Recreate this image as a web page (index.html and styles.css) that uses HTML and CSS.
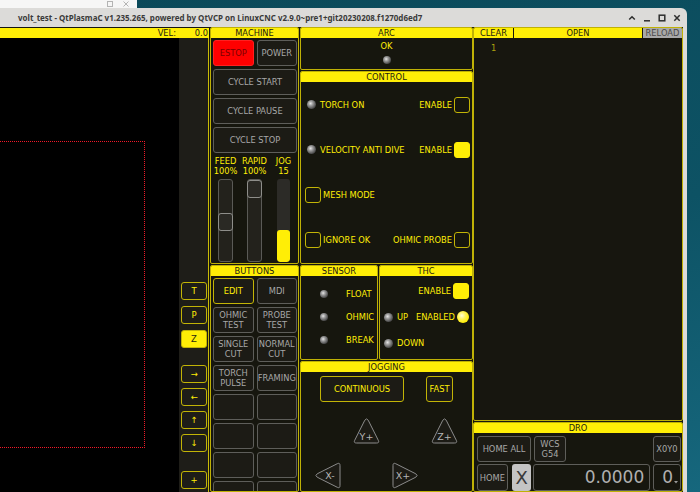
FILE: index.html
```html
<!DOCTYPE html>
<html>
<head>
<meta charset="utf-8">
<link rel="stylesheet" href="styles.css">
</head>
<body>
<div class="deskbar">
  <div class="bgwin">
    <svg width="6" height="6" viewBox="0 0 6 6"><rect x="0.5" y="0.5" width="5" height="5" fill="none" stroke="#b4b4b4"/></svg>
    <svg width="6" height="6" viewBox="0 0 6 6"><path d="M0.5 0.5L5.5 5.5M5.5 0.5L0.5 5.5" stroke="#b4b4b4"/></svg>
  </div>
</div>
<div class="stage">
<div class="win">
  <div class="titlebar">
    <span class="title">volt_test - QtPlasmaC v1.235.265, powered by QtVCP on LinuxCNC v2.9.0~pre1+git20230208.f1270d6ed7</span>
    <div class="wctl">
      <svg width="8" height="8" viewBox="0 0 8 8"><path d="M1.2 5.5L4 2.7L6.8 5.5" fill="none" stroke="#2e2e2e" stroke-width="1.5"/></svg>
      <svg width="8" height="8" viewBox="0 0 8 8"><path d="M1 6.8H7" stroke="#2e2e2e" stroke-width="1.5"/></svg>
      <svg width="8" height="8" viewBox="0 0 8 8"><rect x="1.2" y="1.2" width="5.6" height="5.6" fill="none" stroke="#2e2e2e" stroke-width="1.5"/></svg>
      <svg width="8" height="8" viewBox="0 0 8 8"><path d="M1.3 1.3L6.7 6.7M6.7 1.3L1.3 6.7" stroke="#2e2e2e" stroke-width="1.5"/></svg>
    </div>
  </div>
  <div class="main">
    <!-- preview -->
    <div class="preview">
      <div class="hdr hdr-vel"><span>VEL:</span><span class="velv">0.0</span></div>
      <div class="pv-body">
        <div class="canvas"><div class="limits"></div></div>
        <div class="toolbar">
          <div class="tb">T</div>
          <div class="tb">P</div>
          <div class="tb on">Z</div>
          <div class="tb g2">&#8594;</div>
          <div class="tb g">&#8592;</div>
          <div class="tb g">&#8593;</div>
          <div class="tb g">&#8595;</div>
          <div class="tb g3">+</div>
        </div>
      </div>
    </div>

    <!-- machine column -->
    <div class="mcol">
      <div class="panel machine">
        <div class="hdr">MACHINE</div>
        <div class="mgrid">
          <div class="btn estop">ESTOP</div>
          <div class="btn">POWER</div>
          <div class="btn wide">CYCLE START</div>
          <div class="btn wide">CYCLE PAUSE</div>
          <div class="btn wide">CYCLE STOP</div>
        </div>
        <div class="ovr">
          <div class="ovc">
            <div class="ovl">FEED</div><div class="ovl">100%</div>
            <div class="track"><div class="handle" style="margin-top:33px"></div></div>
          </div>
          <div class="ovc">
            <div class="ovl">RAPID</div><div class="ovl">100%</div>
            <div class="track"><div class="handle" style="margin-top:0px"></div></div>
          </div>
          <div class="ovc">
            <div class="ovl">JOG</div><div class="ovl">15</div>
            <div class="jbar"><div class="jfill" style="height:32px"></div></div>
          </div>
        </div>
      </div>
      <div class="panel buttons">
        <div class="hdr">BUTTONS</div>
        <div class="bgrid">
          <div class="btn y">EDIT</div>
          <div class="btn">MDI</div>
          <div class="btn">OHMIC<br>TEST</div>
          <div class="btn">PROBE<br>TEST</div>
          <div class="btn">SINGLE<br>CUT</div>
          <div class="btn">NORMAL<br>CUT</div>
          <div class="btn">TORCH<br>PULSE</div>
          <div class="btn">FRAMING</div>
          <div class="btn"></div>
          <div class="btn"></div>
          <div class="btn"></div>
          <div class="btn"></div>
          <div class="btn"></div>
          <div class="btn"></div>
          <div class="btn"></div>
          <div class="btn"></div>
        </div>
      </div>
    </div>

    <!-- middle column -->
    <div class="midcol">
      <div class="panel arc">
        <div class="hdr">ARC</div>
        <div class="arcbody">
          <div class="arcok">OK</div>
          <div class="led arcled"></div>
        </div>
      </div>
      <div class="panel control">
        <div class="hdr">CONTROL</div>
        <div class="crows">
          <div class="crow">
            <span class="led cled"></span><span class="clbl">TORCH ON</span>
            <span class="rlbl">ENABLE</span><span class="chk"></span>
          </div>
          <div class="crow">
            <span class="led cled"></span><span class="clbl">VELOCITY ANTI DIVE</span>
            <span class="rlbl">ENABLE</span><span class="chk on"></span>
          </div>
          <div class="crow">
            <span class="chk"></span><span class="klbl">MESH MODE</span>
          </div>
          <div class="crow">
            <span class="chk"></span><span class="klbl">IGNORE OK</span>
            <span class="rlbl">OHMIC PROBE</span><span class="chk"></span>
          </div>
        </div>
      </div>
      <div class="strow">
        <div class="panel sensor">
          <div class="hdr">SENSOR</div>
          <div class="srows">
            <div class="srow"><span class="led sled"></span><span class="slbl">FLOAT</span></div>
            <div class="srow"><span class="led sled"></span><span class="slbl">OHMIC</span></div>
            <div class="srow"><span class="led sled"></span><span class="slbl">BREAK</span></div>
          </div>
        </div>
        <div class="panel thc">
          <div class="hdr">THC</div>
          <div class="trows">
            <div class="trow"><span class="rlbl">ENABLE</span><span class="chk on"></span></div>
            <div class="trow"><span class="led tled"></span><span class="tlbl">UP</span><span class="rlbl">ENABLED</span><span class="yled"></span></div>
            <div class="trow"><span class="led tled"></span><span class="tlbl">DOWN</span></div>
          </div>
        </div>
      </div>
      <div class="panel jog">
        <div class="hdr">JOGGING</div>
        <div class="jrow1">
          <div class="btn y cont">CONTINUOUS</div>
          <div class="btn y fast">FAST</div>
        </div>
        <div class="jgrid">
          <div></div>
          <div class="tri up">
            <svg width="27" height="27" viewBox="0 0 27 27"><path d="M11.8 3.2Q13.5 0.6 15.2 3.2L25.3 23.3Q26.6 26 23.5 26L3.5 26Q0.4 26 1.7 23.3Z" fill="#1c1b15" stroke="#8c8c8c" stroke-width="1"/></svg>
            <span class="tlab">Y+</span>
          </div>
          <div></div>
          <div class="tri up">
            <svg width="27" height="27" viewBox="0 0 27 27"><path d="M11.8 3.2Q13.5 0.6 15.2 3.2L25.3 23.3Q26.6 26 23.5 26L3.5 26Q0.4 26 1.7 23.3Z" fill="#1c1b15" stroke="#8c8c8c" stroke-width="1"/></svg>
            <span class="tlab">Z+</span>
          </div>
          <div class="tri left">
            <svg width="27" height="27" viewBox="0 0 27 27"><path d="M3.2 11.8Q0.6 13.5 3.2 15.2L23.3 25.3Q26 26.6 26 23.5L26 3.5Q26 0.4 23.3 1.7Z" fill="#1c1b15" stroke="#8c8c8c" stroke-width="1"/></svg>
            <span class="tlab">X-</span>
          </div>
          <div></div>
          <div class="tri right">
            <svg width="27" height="27" viewBox="0 0 27 27"><path d="M23.8 11.8Q26.4 13.5 23.8 15.2L3.7 25.3Q1 26.6 1 23.5L1 3.5Q1 0.4 3.7 1.7Z" fill="#1c1b15" stroke="#8c8c8c" stroke-width="1"/></svg>
            <span class="tlab">X+</span>
          </div>
          <div></div>
        </div>
      </div>
    </div>

    <!-- right column -->
    <div class="rcol">
      <div class="panel code">
        <div class="chdr">
          <div class="ch clear">CLEAR</div>
          <div class="ch open">OPEN</div>
          <div class="ch reload">RELOAD</div>
        </div>
        <div class="lines"><span class="ln">1</span></div>
      </div>
      <div class="panel dro">
        <div class="hdr">DRO</div>
        <div class="drow1">
          <div class="btn homeall">HOME ALL</div>
          <div class="btn wcs">WCS<br>G54</div>
          <div class="btn x0y0">X0Y0</div>
        </div>
        <div class="drow2">
          <div class="btn home">HOME</div>
          <div class="axis">X</div>
          <div class="dval">0.0000</div>
          <div class="dsel"><span class="dz">0</span><svg width="4" height="3" viewBox="0 0 4 3"><path d="M0 0H4L2 2.5Z" fill="#9a9a9a"/></svg></div>
        </div>
      </div>
    </div>
  </div>
</div>
<div class="desk-right"></div>
</div>
</body>
</html>
```

FILE: styles.css
```css
* { box-sizing: border-box; margin: 0; padding: 0; }
html, body { width: 700px; height: 492px; overflow: hidden; }
body {
  background: linear-gradient(160deg, #0a4858 0%, #0d5264 60%, #16677d 100%);
  font-family: "DejaVu Sans", sans-serif;
  font-size: 8.3px;
  color: #ffee06;
}
.deskbar { height: 8px; display: flex; }
.bgwin {
  width: 137px; height: 8px; background: #f6f6f6;
  display: flex; justify-content: flex-end; align-items: flex-start;
  gap: 10px; padding: 1px 8px 0 0;
}
.stage { display: flex; height: 484px; }
.win {
  width: 687px; height: 484px; background: #dcdbd9;
  border-radius: 0 6px 0 0;
  display: flex; flex-direction: column;
}
.titlebar {
  height: 19px; display: flex; align-items: center;
  padding-left: 18px;
}
.title {
  font-family: "Noto Sans", sans-serif; font-weight: bold;
  font-size: 7.98px; color: #3a3a3a; white-space: nowrap;
}
.wctl { margin-left: auto; display: flex; gap: 7px; padding-right: 6px; align-items: center; }
.desk-right { flex: 1; }

.main {
  width: 683px; height: 465px; background: #16160e;
  display: flex; overflow: hidden;
}

.hdr {
  height: 10px; background: #ffee06; color: #1c1b10;
  line-height: 10px; text-align: center; white-space: nowrap;
  flex: none; align-self: stretch;
}

/* preview */
.preview { width: 209px; margin-right: 1px; display: flex; flex-direction: column; padding-top: 1px; }
.hdr-vel { display: flex; justify-content: flex-end; padding-right: 1px; }
.velv { width: 32px; text-align: right; }
.pv-body { flex: 1; display: flex; border-right: 1px solid #c8ba06; }
.canvas { width: 179px; background: #000; }
.limits {
  margin-top: 103px; width: 145px; height: 307px;
  border: 1px dotted #f01828; border-left: none;
}
.toolbar {
  width: 29px; background: #1e1d18;
  display: flex; flex-direction: column; align-items: flex-start;
  padding: 244px 0 0 2px;
}
.tb {
  width: 26px; height: 18px; flex: none;
  border: 1px solid #c2b406; border-radius: 3px;
  display: flex; align-items: center; justify-content: center;
  font-size: 8.5px; color: #ffee06; margin-bottom: 6px;
}
.tb.on { background: #ffee06; color: #2a2810; }
.tb.g2 { margin-top: 11px; margin-bottom: 5px; }
.tb.g { margin-bottom: 5px; }
.tb.g3 { margin-top: 14px; }

/* panels */
.panel { border: 1px solid #bfb106; border-radius: 2px; display: flex; flex-direction: column; overflow: hidden; }

.btn {
  border: 1px solid #5e5e5a; border-radius: 3px; background: #1c1b15;
  color: #a8a8a8; display: flex; align-items: center; justify-content: center;
  text-align: center; line-height: 10px; white-space: nowrap;
}
.btn.y { border-color: #c2b406; color: #ffee06; }
.btn.estop { background: #ff0000; border-color: #ff2020; color: #7a0000; }

.mcol { width: 89px; margin-right: 1px; display: flex; flex-direction: column; gap: 1px; }
.machine { height: 237px; flex: none; }
.mgrid {
  display: grid; grid-template-columns: 1fr 1fr; grid-auto-rows: 26px;
  gap: 3px; padding: 2px 1px 0 2px;
}
.mgrid .wide { grid-column: 1 / 3; }
.ovr { display: grid; grid-template-columns: 29px 29px 29px; margin-top: 3px; }
.ovc { display: flex; flex-direction: column; align-items: center; }
.ovl { line-height: 10px; height: 10px; }
.track {
  margin-top: 3px; width: 15px; height: 83px;
  border: 1px solid #5a5a56; border-radius: 3px; background: #23221c;
}
.handle {
  width: 15px; height: 18px; margin-left: -1px;
  border: 1px solid #8e8e8a; border-radius: 3px; background: #2a2924;
}
.jbar {
  margin-top: 3px; width: 13px; height: 83px; border-radius: 3px;
  background: #2c2b27; display: flex; flex-direction: column; justify-content: flex-end;
  overflow: hidden;
}
.jfill { background: #ffee06; border-radius: 3px; }

.buttons { flex: 1; }
.bgrid {
  display: grid; grid-template-columns: 1fr 1fr; grid-auto-rows: 26px;
  gap: 3px; padding: 2px 1px 0 2px;
}

/* middle */
.midcol { width: 173px; display: flex; flex-direction: column; gap: 1px; }
.arc { height: 43px; flex: none; }
.arcbody { display: flex; flex-direction: column; align-items: center; }
.arcok { margin-top: 3px; line-height: 10px; }
.led {
  display: block; border-radius: 50%; flex: none;
  background: radial-gradient(circle at 40% 38%, #e6e6e6 0%, #9a9a9a 30%, #4a4a4a 70%, #2c2c2c 100%);
}
.arcled { width: 8px; height: 8px; margin-top: 5px; }

.control { height: 193px; flex: none; }
.crows { display: grid; grid-template-rows: repeat(4, 45px); padding: 0 2px 0 4px; }
.crow { display: flex; align-items: center; }
.cled { width: 9px; height: 9px; margin-left: 2px; }
.clbl { margin-left: 4px; }
.klbl { margin-left: 2px; }
.rlbl { margin-left: auto; margin-right: 2px; }
.chk {
  width: 16px; height: 16px; flex: none;
  border: 1px solid #c2b406; border-radius: 3px;
}
.chk.on { background: #ffee06; border-color: #ffee06; }

.strow { height: 95px; flex: none; display: flex; gap: 1px; }
.sensor { width: 78px; }
.srows { display: grid; grid-template-rows: repeat(3, 23px); padding-top: 6px; }
.srow { display: flex; align-items: center; }
.sled { width: 8px; height: 8px; margin-left: 19px; }
.slbl { margin-left: 18px; }
.thc { flex: 1; }
.trows { display: grid; grid-template-rows: repeat(3, 26px); padding: 2px 3px 0 4px; }
.trow { display: flex; align-items: center; }
.tled { width: 9px; height: 9px; }
.tlbl { margin-left: 4px; }
.yled {
  width: 12px; height: 12px; border-radius: 50%; flex: none;
  background: radial-gradient(circle at 40% 38%, #ffffd8 0%, #fff25a 35%, #ffee06 70%, #d9c800 100%);
}

.jog { flex: 1; }
.jrow1 { display: flex; margin-top: 4px; padding-left: 19px; }
.cont { width: 84px; height: 26px; }
.fast { width: 27px; height: 26px; margin-left: 22px; }
.jgrid {
  display: grid; grid-template-columns: repeat(4, 27px); grid-template-rows: 27px 27px;
  column-gap: 12px; row-gap: 18px; margin: 15px 0 0 13px;
}
.tri { position: relative; width: 27px; height: 27px; display: flex; justify-content: center; }
.tri svg { position: absolute; left: 0; top: 0; }
.tlab { position: relative; font-size: 9.5px; line-height: 10px; color: #b6b6b6; }
.tri.up { align-items: flex-end; padding-bottom: 2px; }
.tri.left { align-items: center; padding-left: 5px; }
.tri.right { align-items: center; padding-right: 5px; }

/* right */
.rcol { width: 210px; display: flex; flex-direction: column; gap: 1px; }
.code { height: 394px; flex: none; background: #17160f; }
.chdr { display: flex; height: 10px; gap: 1px; background: #16160e; flex: none; }
.ch { background: #ffee06; color: #1c1b10; line-height: 10px; text-align: center; }
.clear { width: 39px; }
.open { flex: 1; }
.reload { width: 39px; background: #a9a9a9; color: #4a4a4a; }
.lines { padding: 5px 0 0 17px; line-height: 10px; }
.ln { color: #aaa010; }

.dro { flex: 1; }
.drow1 { display: flex; padding: 3px 1px 0 3px; height: 29px; }
.homeall { width: 54px; height: 26px; }
.wcs { width: 32px; height: 26px; margin-left: 3px; }
.x0y0 { width: 28px; height: 26px; margin-left: auto; }
.drow2 { display: flex; padding: 2px 1px 0 3px; }
.home { width: 31px; height: 27px; }
.axis {
  width: 20px; height: 27px; margin-left: 4px; background: #c4c4c4; border-radius: 3px;
  color: #3a3a3a; font-size: 18px; display: flex; align-items: center; justify-content: center;
}
.dval {
  width: 118px; height: 27px; margin-left: 2px;
  border: 1px solid #5e5e5a; border-radius: 3px;
  color: #b0b0b0; font-size: 17px; text-align: right; line-height: 25px; padding-right: 5px;
}
.dsel {
  width: 28px; height: 27px; margin-left: 3px;
  border: 1px solid #5e5e5a; border-radius: 3px;
  display: flex; align-items: center; padding-left: 8px; gap: 1px;
}
.dz { color: #b0b0b0; font-size: 17px; line-height: 25px; }
.dsel svg { align-self: flex-end; margin-bottom: 6px; }
```
